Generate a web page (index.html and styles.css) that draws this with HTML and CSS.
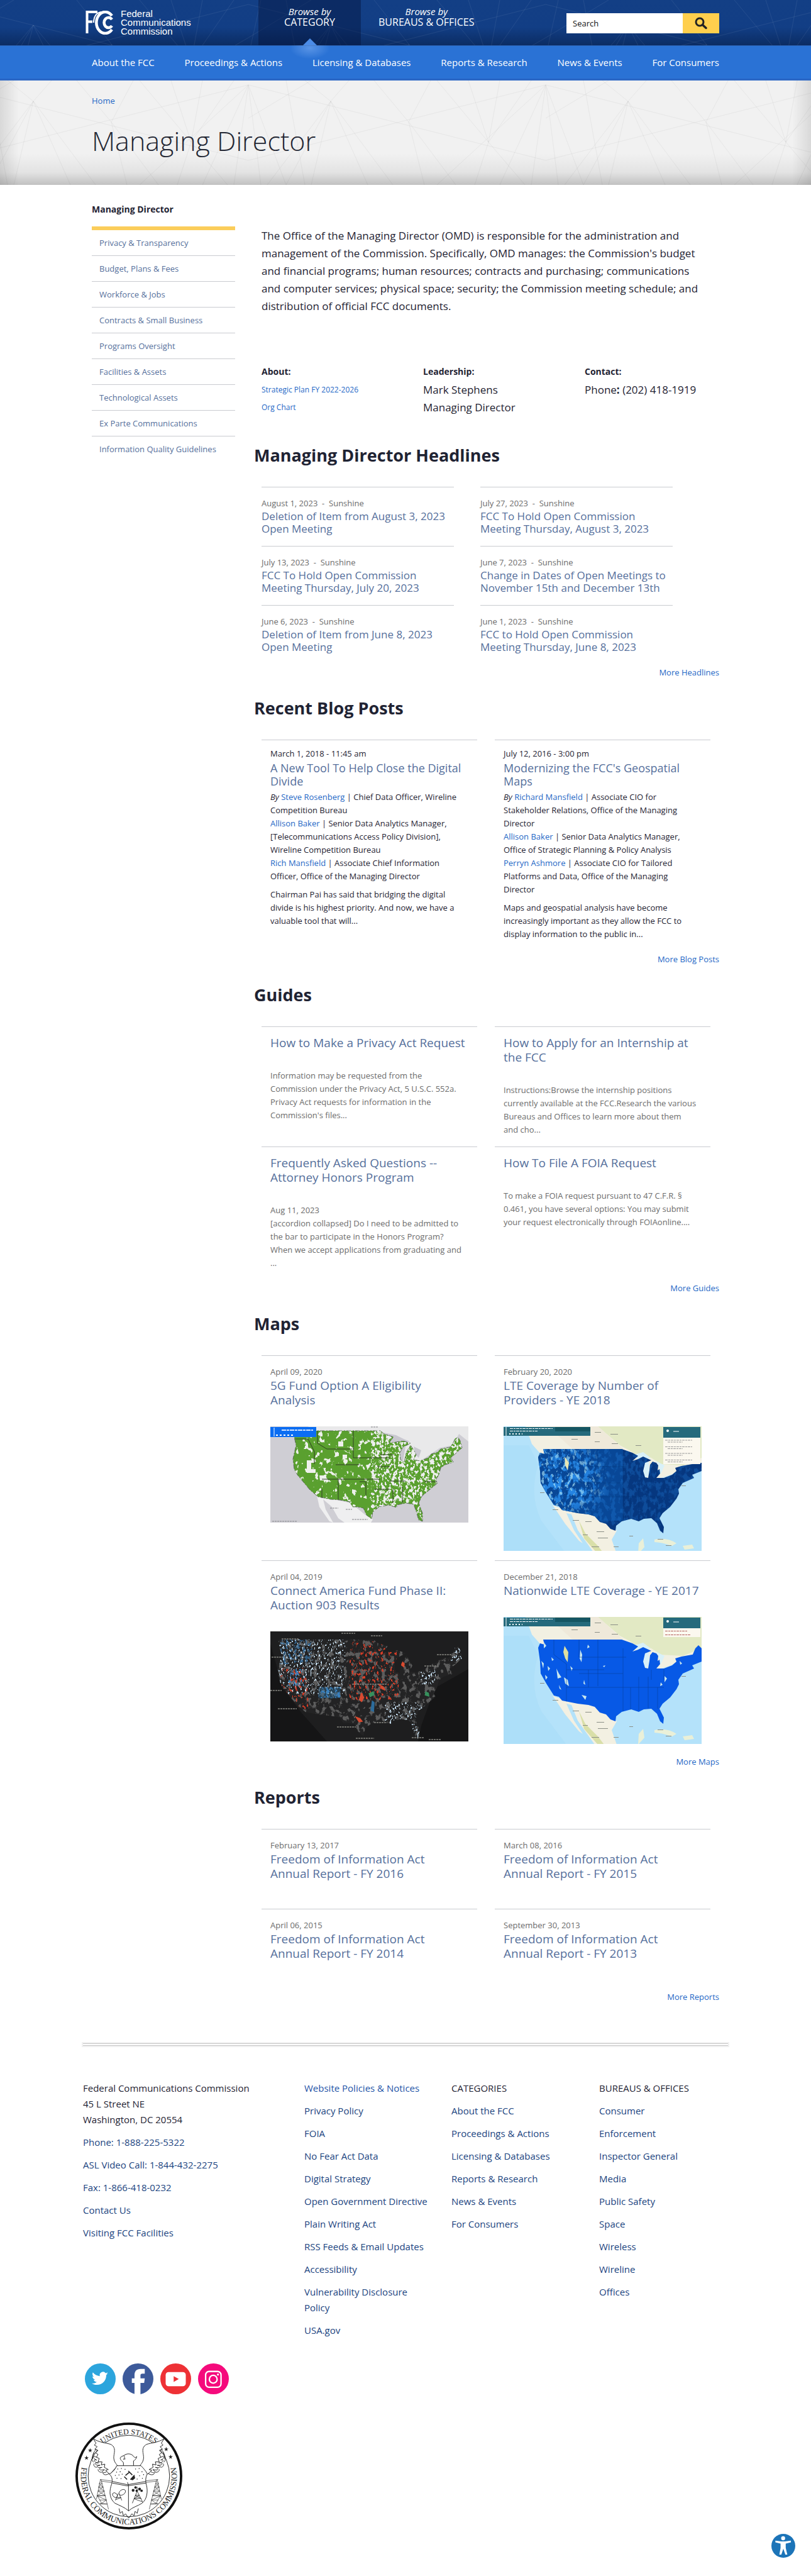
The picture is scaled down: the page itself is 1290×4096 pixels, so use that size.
FILE: index.html
```html
<!DOCTYPE html>
<html lang="en">
<head>
<meta charset="utf-8">
<meta name="viewport" content="width=device-width, initial-scale=1">
<title>Managing Director | Federal Communications Commission</title>
<link rel="stylesheet" href="styles.css">
</head>
<body>
<svg class="defs" width="0" height="0" aria-hidden="true">
  <defs>
    <path id="us-wide" d="M37 7H175L181 12 196 17 189 26 200 25 211 23 223 27 211 33 206 42 207 53 213 57 216 42 223 30 229 39 232 45 228 53 238 55 251 50 256 44 266 41 271 36 286 33 291 26 294 19 299 18 302 23 305 34 296 42 287 50 291 57 278 61 271 66 268 77 263 85 266 90 253 101 241 111 236 122 242 138 242 151 236 149 232 135 228 124 216 122 201 125 201 129 188 125 173 128 163 136 161 147 153 141 148 130 138 128 131 128 126 120 111 117 96 116 76 112 63 101 53 89 43 77 38 68 36 52 41 30 38 17Z"/>
    <path id="us-tall" d="M63 36H188L205 42 214 47 205 55 214 52 222 48 235 54 225 58 222 71 225 81 230 82 232 70 233 61 237 56 243 58 246 62 245 70 248 68 249 75 243 82 255 82 268 77 275 71 273 66 283 63 300 60 315 58V71L300 77 303 82 285 90 278 100 279 107 275 115 265 128 253 138 248 146 255 160 254 170 249 166 244 154 235 146 223 147 215 151 203 147 188 151 179 158 178 166 170 163 163 155 153 152 145 143 135 140 118 138 93 133 88 127 80 125 68 106 59 90 58 71 55 49 58 42 65 44Z"/>
    <path id="states" d="M80 36V60L100 75V140M120 36V64H150M150 36V110M120 90H190M150 64H195M190 50V150M100 84H160M135 84V112M100 112H255M215 95V148M230 95V146M202 112V150M255 82V100M235 84V100M245 112V146" />
    <clipPath id="clip-wide"><use href="#us-wide"/></clipPath>
    <clipPath id="clip-tall"><use href="#us-tall"/></clipPath>
    <clipPath id="clip-east"><rect x="160" y="0" width="160" height="160"/></clipPath>
    <filter id="speck-sparse" x="0" y="0" width="100%" height="100%" color-interpolation-filters="sRGB">
      <feTurbulence type="fractalNoise" baseFrequency="0.13 0.1" numOctaves="3" seed="7"/>
      <feColorMatrix values="0 0 0 0 .93  0 0 0 0 .94  0 0 0 0 .92  16 0 0 0 -9.8"/>
    </filter>
    <filter id="speck-dense" x="0" y="0" width="100%" height="100%" color-interpolation-filters="sRGB">
      <feTurbulence type="fractalNoise" baseFrequency="0.26 0.2" numOctaves="3" seed="3"/>
      <feColorMatrix values="0 0 0 0 .93  0 0 0 0 .93  0 0 0 0 .94  14 0 0 0 -7.5"/>
    </filter>
    <filter id="speck-light" x="0" y="0" width="100%" height="100%" color-interpolation-filters="sRGB">
      <feTurbulence type="fractalNoise" baseFrequency="0.14 0.09" numOctaves="5" seed="11"/>
      <feColorMatrix values="0 0 0 0 .16  0 0 0 0 .55  0 0 0 0 .92  7 0 0 0 -3.3"/>
    </filter>
    <filter id="speck-pale" x="0" y="0" width="100%" height="100%" color-interpolation-filters="sRGB">
      <feTurbulence type="fractalNoise" baseFrequency="0.18 0.11" numOctaves="4" seed="21"/>
      <feColorMatrix values="0 0 0 0 .66  0 0 0 0 .88  0 0 0 0 .96  11 0 0 0 -6.4"/>
    </filter>
    <filter id="speck-grey" x="0" y="0" width="100%" height="100%" color-interpolation-filters="sRGB">
      <feTurbulence type="fractalNoise" baseFrequency="0.16 0.12" numOctaves="4" seed="5"/>
      <feColorMatrix values="0 0 0 0 .36  0 0 0 0 .36  0 0 0 0 .36  10 0 0 0 -5.4"/>
    </filter>
    <filter id="speck-white" x="0" y="0" width="100%" height="100%" color-interpolation-filters="sRGB">
      <feTurbulence type="fractalNoise" baseFrequency="0.4 0.26" numOctaves="3" seed="9"/>
      <feColorMatrix values="0 0 0 0 .78  0 0 0 0 .88  0 0 0 0 .95  13 0 0 0 -7.9"/>
    </filter>
    <filter id="speck-red" x="0" y="0" width="100%" height="100%" color-interpolation-filters="sRGB">
      <feTurbulence type="fractalNoise" baseFrequency="0.3 0.2" numOctaves="3" seed="14"/>
      <feColorMatrix values="0 0 0 0 .86  0 0 0 0 .24  0 0 0 0 .15  13 0 0 0 -7.9"/>
    </filter>
    <filter id="speck-blue" x="0" y="0" width="100%" height="100%" color-interpolation-filters="sRGB">
      <feTurbulence type="fractalNoise" baseFrequency="0.25 0.2" numOctaves="3" seed="31"/>
      <feColorMatrix values="0 0 0 0 .22  0 0 0 0 .5  0 0 0 0 .75  13 0 0 0 -7"/>
    </filter>
    <radialGradient id="west-fade"><stop offset="0" stop-color="#fff"/><stop offset=".6" stop-color="#bbb"/><stop offset="1" stop-color="#000"/></radialGradient>
    <mask id="west"><ellipse cx="95" cy="85" rx="75" ry="70" fill="url(#west-fade)"/></mask>
    <g id="basemap">
      <rect width="315" height="203" fill="#b4e2fa"/>
      <path d="M55 60Q40 110 60 150L100 203H0V30H40Z" fill="#a6dbf8" opacity=".5"/>
      <path d="M35 0H315V58L290 62 270 76 250 84 225 84 200 45H60L45 28Z" fill="#f2f0e2"/>
      <path d="M150 0H315V50L285 62 250 60 235 50 215 48 200 38 185 30Z" fill="#e2e9c4"/>
      <path d="M70 0H150L190 36H110Z" fill="#efe9da"/>
      <path d="M78 125 95 132 145 140 180 166 172 180 180 203H145L118 165 108 140 100 138 112 165 126 186 120 182 98 155Z" fill="#f3f0e2"/>
      <path d="M120 150 130 170 150 190 160 203H150L128 178Z" fill="#d9dfa8"/>
      <path d="M240 180Q260 176 275 186L268 190Q250 184 240 184ZM285 190 300 188 303 194 288 196ZM215 186 222 178 224 192 214 203Z" fill="#eaf0d8"/>
      <path d="M205 46 222 41 234 50 226 52 214 52ZM223 58 231 56 232 78 225 82 221 72ZM240 54 256 62 250 76 246 60Z" fill="#d9f1f8"/>
      <path d="M250 82 268 76 275 72 280 74 262 84Z" fill="#cdeaf5"/>
      <g fill="#8b8f86"><path d="M145 9h10v1h-10zM170 12h12v1h-12zM172 27h10v1h-10zM145 24h8v1h-8zM108 20h10v1h-10zM210 30h9v1h-9zM110 149h10v1h-10zM130 151h10v1h-10zM148 167h12v1h-12zM150 177h16v1h-16zM126 172h8v1h-8zM140 191h12v1h-12zM175 191h8v1h-8zM245 179h9v1h-9zM258 189h9v1h-9zM200 174h6v1h-6zM58 105h7v1h-7zM78 132h9v1h-9zM283 94h7v1h-7z"/></g>
    </g>
    <g id="viewer-bar">
      <path d="M0 1H138V15H0Z" fill="#256a7c"/><path d="M82 1H138V8H82Z" fill="#155562"/>
      <path d="M4 1V15" stroke="#fff"/>
      <path d="M10 3.500H78M10 7.500H54" stroke="#fff" stroke-dasharray="5 1 3 1"/><path d="M9 12H30" stroke="#fff" stroke-width="2" stroke-dasharray="2 3"/>
      <path d="M254 1H313V18H254Z" fill="#256a7c"/><circle cx="261" cy="7" r="2" fill="#fff"/><path d="M270 8H279" stroke="#fff"/>
    </g>
  </defs>
</svg>

<header class="top">
  <div class="wrap top-row">
    <a class="logo" href="#" aria-label="FCC home">
      <svg width="46" height="38" viewBox="0 0 46 38" aria-hidden="true" fill="none" stroke="#fff">
        <path d="M2.500 36V2H19M2.500 17.500H11" stroke-width="4"/>
        <path d="M42 8A14 17 0 1 0 42 30" stroke-width="4.500"/>
        <path d="M42 14A7 8 0 1 0 42 24" stroke-width="4.500"/>
        <path d="M13 19C13 10 17 3 25 2" stroke-width="2"/>
      </svg>
      <span class="logo-text">Federal<br>Communications<br>Commission</span>
    </a>
    <nav class="browse" aria-label="Browse">
      <a class="browse-item is-active" href="#"><em>Browse by</em>CATEGORY</a>
      <a class="browse-item" href="#"><em>Browse by</em>BUREAUS &amp; OFFICES</a>
    </nav>
    <form class="search" role="search">
      <input class="search-input" type="text" placeholder="Search" aria-label="Search">
      <button class="search-button" type="submit" aria-label="Submit search">
        <svg width="22" height="22" viewBox="0 0 22 22" aria-hidden="true" fill="none" stroke="#222" stroke-linecap="round"><circle cx="9" cy="9" r="6" stroke-width="3"/><path d="M13.500 13.500 19 18.500" stroke-width="3.500"/></svg>
      </button>
    </form>
  </div>
</header>
<nav class="mainnav" aria-label="Main">
  <div class="wrap inset mainnav-row">
    <a href="#">About the FCC</a><a href="#">Proceedings &amp; Actions</a><a href="#">Licensing &amp; Databases</a><a href="#">Reports &amp; Research</a><a href="#">News &amp; Events</a><a href="#">For Consumers</a>
  </div>
</nav>
<div class="banner">
  <div class="wrap inset">
    <a class="crumb" href="#">Home</a>
    <h1>Managing Director</h1>
  </div>
</div>

<div class="wrap inset layout">
  <aside class="side">
    <h2 class="side-title">Managing Director</h2>
    <ul class="side-list">
      <li><a href="#">Privacy &amp; Transparency</a></li>
      <li><a href="#">Budget, Plans &amp; Fees</a></li>
      <li><a href="#">Workforce &amp; Jobs</a></li>
      <li><a href="#">Contracts &amp; Small Business</a></li>
      <li><a href="#">Programs Oversight</a></li>
      <li><a href="#">Facilities &amp; Assets</a></li>
      <li><a href="#">Technological Assets</a></li>
      <li><a href="#">Ex Parte Communications</a></li>
      <li><a href="#">Information Quality Guidelines</a></li>
    </ul>
  </aside>

  <main class="main">
    <p class="intro">The Office of the Managing Director (OMD) is responsible for the administration and management of the Commission. Specifically, OMD manages: the Commission's budget and financial programs; human resources; contracts and purchasing; communications and computer services; physical space; security; the Commission meeting schedule; and distribution of official FCC documents.</p>
    <div class="facts">
      <div><h3>About:</h3><a href="#">Strategic Plan FY 2022-2026</a><a href="#">Org Chart</a></div>
      <div><h3>Leadership:</h3><p>Mark Stephens<br>Managing Director</p></div>
      <div><h3>Contact:</h3><p>Phone<b>:</b> (202) 418-1919</p></div>
    </div>

    <section class="block">
      <h2>Managing Director Headlines</h2>
      <div class="cards headlines">
        <article><p class="date">August 1, 2023 &nbsp;-&nbsp; Sunshine</p><h3><a href="#">Deletion of Item from August 3, 2023 Open Meeting</a></h3></article>
        <article><p class="date">July 27, 2023 &nbsp;-&nbsp; Sunshine</p><h3><a href="#">FCC To Hold Open Commission Meeting Thursday, August 3, 2023</a></h3></article>
        <article><p class="date">July 13, 2023 &nbsp;-&nbsp; Sunshine</p><h3><a href="#">FCC To Hold Open Commission Meeting Thursday, July 20, 2023</a></h3></article>
        <article><p class="date">June 7, 2023 &nbsp;-&nbsp; Sunshine</p><h3><a href="#">Change in Dates of Open Meetings to November 15th and December 13th</a></h3></article>
        <article><p class="date">June 6, 2023 &nbsp;-&nbsp; Sunshine</p><h3><a href="#">Deletion of Item from June 8, 2023 Open Meeting</a></h3></article>
        <article><p class="date">June 1, 2023 &nbsp;-&nbsp; Sunshine</p><h3><a href="#">FCC to Hold Open Commission Meeting Thursday, June 8, 2023</a></h3></article>
      </div>
      <a class="more" href="#">More Headlines</a>
    </section>

    <section class="block">
      <h2>Recent Blog Posts</h2>
      <div class="cards blog">
        <article>
          <p class="date">March 1, 2018 - 11:45 am</p>
          <h3><a href="#">A New Tool To Help Close the Digital Divide</a></h3>
          <ul class="authors">
            <li><em>By</em> <a href="#">Steve Rosenberg</a> | Chief Data Officer, Wireline Competition Bureau</li>
            <li><a href="#">Allison Baker</a> | Senior Data Analytics Manager, [Telecommunications Access Policy Division], Wireline Competition Bureau</li>
            <li><a href="#">Rich Mansfield</a> | Associate Chief Information Officer, Office of the Managing Director</li>
          </ul>
          <p class="text">Chairman Pai has said that bridging the digital divide is his highest priority. And now, we have a valuable tool that will...</p>
        </article>
        <article>
          <p class="date">July 12, 2016 - 3:00 pm</p>
          <h3><a href="#">Modernizing the FCC's Geospatial Maps</a></h3>
          <ul class="authors">
            <li><em>By</em> <a href="#">Richard Mansfield</a> | Associate CIO for Stakeholder Relations, Office of the Managing Director</li>
            <li><a href="#">Allison Baker</a> | Senior Data Analytics Manager, Office of Strategic Planning &amp; Policy Analysis</li>
            <li><a href="#">Perryn Ashmore</a> | Associate CIO for Tailored Platforms and Data, Office of the Managing Director</li>
          </ul>
          <p class="text">Maps and geospatial analysis have become increasingly important as they allow the FCC to display information to the public in...</p>
        </article>
      </div>
      <a class="more" href="#">More Blog Posts</a>
    </section>

    <section class="block">
      <h2>Guides</h2>
      <div class="cards guides">
        <article><h3><a href="#">How to Make a Privacy Act Request</a></h3><p class="text">Information may be requested from the Commission under the Privacy Act, 5 U.S.C. 552a. Privacy Act requests for information in the Commission's files...</p></article>
        <article><h3><a href="#">How to Apply for an Internship at the FCC</a></h3><p class="text">Instructions:Browse the internship positions currently available at the FCC.Research the various Bureaus and Offices to learn more about them<br>and cho...</p></article>
        <article><h3><a href="#">Frequently Asked Questions -- Attorney Honors Program</a></h3><p class="text">Aug 11, 2023<br>[accordion collapsed] Do I need to be admitted to the bar to participate in the Honors Program?<br>When we accept applications from graduating and<br>...</p></article>
        <article><h3><a href="#">How To File A FOIA Request</a></h3><p class="text">To make a FOIA request pursuant to 47 C.F.R. § 0.461, you have several options: You may submit your request electronically through FOIAonline....</p></article>
      </div>
      <a class="more" href="#">More Guides</a>
    </section>

    <section class="block">
      <h2>Maps</h2>
      <div class="cards maps">
        <article>
          <p class="date">April 09, 2020</p>
          <h3><a href="#">5G Fund Option A Eligibility Analysis</a></h3>
          <svg class="map" viewBox="0 0 315 153" role="img" aria-label="5G Fund eligibility map">
            <rect width="315" height="153" fill="#cfced4"/>
            <path d="M60 0H315V24L300 12 290 30 270 34 255 44 240 54 232 60 205 60 185 20 70 8Z" fill="#e9e9ea"/>
            <path d="M74 110 100 116 128 122 150 140 163 148 160 153H118L108 146 98 128 84 116 88 132 100 153 94 151 78 128Z" fill="#efeff0"/>
            <path d="M180 10 200 14 212 20 222 24 205 28 190 24ZM206 34 215 32 211 56 206 52ZM228 32 240 38 236 50 230 44ZM238 56 256 48 252 54Z" fill="#c9c8d0"/>
            <use href="#us-wide" fill="#5aa02f"/>
            <g clip-path="url(#clip-wide)">
              <rect width="315" height="153" filter="url(#speck-sparse)"/>
              <g clip-path="url(#clip-east)"><rect x="0" width="315" height="160" filter="url(#speck-dense)"/></g>
              <g fill="#eef0ec"><path d="M58 54h12v4h-5v10h7v6h-14zM78 78h10l3 8h-12zM115 45h7v6h-7zM108 24h8v8h-8z"/></g>
              <path d="M38 20H60L70 40V60M75 7V27L90 36H130M132 7V50H190M104 61H142M82 84H175M108 84V118M82 100V114M190 87H215M245 88H268M142 88H152V110M165 100H190M195 100V122M210 96V122M170 64H190M175 45H195" fill="none" stroke="#2f3f25" stroke-width="1"/>
            </g>
            <use href="#us-wide" fill="none" stroke="#4b5a4c" stroke-width=".8" stroke-dasharray="7 3 2 2"/>
            <path d="M0 1H73V17H0Z" fill="#0b6df2"/><path d="M6 2V16" stroke="#fff"/><path d="M18 6H68" stroke="#cfe2ff" stroke-width="2" stroke-dasharray="7 1 4 1"/><path d="M9 14H38" stroke="#fff" stroke-width="2" stroke-dasharray="3 3"/>
            <path d="M95 130H108M120 132H130M130 148H155M160 1H172M3 151H42" stroke="#85858a" stroke-dasharray="3 1"/>
          </svg>
        </article>
        <article>
          <p class="date">February 20, 2020</p>
          <h3><a href="#">LTE Coverage by Number of Providers - YE 2018</a></h3>
          <svg class="map" viewBox="0 0 315 198" role="img" aria-label="LTE coverage map by number of providers">
            <use href="#basemap"/>
            <use href="#us-tall" fill="#06377f"/>
            <g clip-path="url(#clip-tall)">
              <path d="M55 30H190V150H55Z" fill="#0a57b0" opacity=".5"/>
              <rect width="315" height="198" filter="url(#speck-light)" mask="url(#west)"/>
              <rect width="315" height="198" filter="url(#speck-light)" opacity=".25"/>
              <rect width="315" height="198" filter="url(#speck-pale)" mask="url(#west)" opacity=".8"/>
              <path d="M97 48 104 58 102 70 98 62Z" fill="#e8e6b4"/>
              <use href="#states" fill="none" stroke="#04306e" stroke-width=".6" opacity=".6"/>
            </g>
            <use href="#viewer-bar"/>
            <path d="M254 18H313V60H254Z" fill="#fbf8ef"/><g stroke="#9a9a9a" stroke-dasharray="4 1 3 1"><path d="M257 22H300M261 25H285M257 32.500H300M261 35.500H285M257 43H300M261 46H285M257 53.500H300M261 56.500H285"/></g>
          </svg>
        </article>
        <article>
          <p class="date">April 04, 2019</p>
          <h3><a href="#">Connect America Fund Phase II: Auction 903 Results</a></h3>
          <svg class="map" viewBox="0 0 315 175" role="img" aria-label="Connect America Fund auction results map">
            <rect width="315" height="175" fill="#1e1e1f"/>
            <path d="M0 20 20 90 50 130 90 175H0ZM262 90 315 60V175H235L240 150Z" fill="#151516"/>
            <g transform="translate(-27 5) scale(1.09 1.1)">
              <use href="#us-wide" fill="#232324"/>
              <g clip-path="url(#clip-wide)">
                <rect width="315" height="160" filter="url(#speck-grey)"/>
                <svg x="36" y="6" width="98" height="80"><rect width="98" height="80" filter="url(#speck-white)"/><rect x="0" y="0" width="50" height="36" filter="url(#speck-blue)" opacity=".6"/></svg>
                <svg x="50" y="50" width="24" height="24"><rect width="24" height="24" filter="url(#speck-blue)"/></svg>
                <svg x="95" y="76" width="32" height="16"><rect width="32" height="16" fill="#2e6d9c" opacity=".4"/><rect width="32" height="16" filter="url(#speck-blue)"/></svg>
                <svg x="140" y="10" width="72" height="85"><rect width="72" height="85" filter="url(#speck-red)"/></svg>
                <svg x="38" y="48" width="42" height="60"><rect width="42" height="60" filter="url(#speck-red)"/></svg>
                <svg x="244" y="50" width="22" height="22"><rect width="22" height="22" filter="url(#speck-white)"/></svg>
                <svg x="192" y="98" width="58" height="60"><rect width="58" height="60" filter="url(#speck-white)"/></svg>
                <svg x="288" y="12" width="22" height="26"><rect width="22" height="26" filter="url(#speck-white)"/></svg>
                <path d="M148 118 156 121 160 126 154 127ZM184 72 190 75 193 81 187 79ZM217 38 221 42 220 48 215 44ZM157 84 162 91 158 98 154 94Z" fill="#d84a30"/>
                <path d="M168 85 175 82 177 87 170 91ZM251 82 256 84 257 90 250 88Z" fill="#36905c"/>
                <path d="M173 95 177 98 176 112 171 110Z" fill="#2c6c9c"/>
              </g>
            </g>
            <path d="M113 3H135M160 7H178M18 12H46M2 41H20M0 94H18M12 123H42M106 152H136M165 145H186M136 170H165M225 169H244M252 172H272M265 37H288M245 55H266M130 84H186" stroke="#84847f" stroke-width="1.500" stroke-dasharray="3 1"/>
          </svg>
        </article>
        <article>
          <p class="date">December 21, 2018</p>
          <h3><a href="#">Nationwide LTE Coverage - YE 2017</a></h3>
          <svg class="map" viewBox="0 0 315 202" role="img" aria-label="Nationwide LTE coverage map">
            <use href="#basemap"/>
            <use href="#us-tall" fill="#0759e6"/>
            <path d="M300 62 305 50 310 45 315 50V66Z" fill="#0759e6"/>
            <g clip-path="url(#clip-tall)">
              <path d="M97 46 103 56 102 72 98 66 95 56Z" fill="#dfe0a0"/>
              <path d="M122 52 125 60 124 72 121 66ZM84 82 88 90 92 96 86 98ZM96 96 102 100 104 110 98 106ZM88 108 92 116 89 114ZM64 40 68 46 64 50ZM124 124 132 126 130 132ZM60 70 64 74 63 82ZM134 44 137 48 133 50ZM70 78 74 82 71 86ZM128 100 130 108 127 106ZM158 78 162 77 160 80ZM256 94 260 98 256 104ZM250 104 253 108 249 110ZM76 64 80 68 77 70ZM66 92 70 96 67 100ZM106 78 110 82 108 86ZM280 70 284 74 281 76Z" fill="#c9e7ee"/>
              <use href="#states" fill="none" stroke="#063f9f" stroke-width=".6"/>
            </g>
            <use href="#viewer-bar"/>
            <path d="M254 18H313V32H254Z" fill="#fbf8ef"/><path d="M257 22.500H293M257 28.500H297" stroke="#b3605c" stroke-dasharray="4 1 3 1"/>
          </svg>
        </article>
      </div>
      <a class="more" href="#">More Maps</a>
    </section>

    <section class="block">
      <h2>Reports</h2>
      <div class="cards reports">
        <article><p class="date">February 13, 2017</p><h3><a href="#">Freedom of Information Act Annual Report - FY 2016</a></h3></article>
        <article><p class="date">March 08, 2016</p><h3><a href="#">Freedom of Information Act Annual Report - FY 2015</a></h3></article>
        <article><p class="date">April 06, 2015</p><h3><a href="#">Freedom of Information Act Annual Report - FY 2014</a></h3></article>
        <article><p class="date">September 30, 2013</p><h3><a href="#">Freedom of Information Act Annual Report - FY 2013</a></h3></article>
      </div>
      <a class="more" href="#">More Reports</a>
    </section>
  </main>
</div>

<footer class="wrap footer">
  <div class="rule"></div>
  <div class="foot-cols">
    <ul>
      <li>Federal Communications Commission<br>45 L Street NE<br>Washington, DC 20554</li>
      <li><a href="#">Phone: 1-888-225-5322</a></li>
      <li><a href="#">ASL Video Call: 1-844-432-2275</a></li>
      <li><a href="#">Fax: 1-866-418-0232</a></li>
      <li><a href="#">Contact Us</a></li>
      <li><a href="#">Visiting FCC Facilities</a></li>
    </ul>
    <ul>
      <li><a class="brighter" href="#">Website Policies &amp; Notices</a></li>
      <li><a href="#">Privacy Policy</a></li>
      <li><a href="#">FOIA</a></li>
      <li><a href="#">No Fear Act Data</a></li>
      <li><a href="#">Digital Strategy</a></li>
      <li><a href="#">Open Government Directive</a></li>
      <li><a href="#">Plain Writing Act</a></li>
      <li><a href="#">RSS Feeds &amp; Email Updates</a></li>
      <li><a href="#">Accessibility</a></li>
      <li><a href="#">Vulnerability Disclosure Policy</a></li>
      <li><a href="#">USA.gov</a></li>
    </ul>
    <ul>
      <li>CATEGORIES</li>
      <li><a href="#">About the FCC</a></li>
      <li><a href="#">Proceedings &amp; Actions</a></li>
      <li><a href="#">Licensing &amp; Databases</a></li>
      <li><a href="#">Reports &amp; Research</a></li>
      <li><a href="#">News &amp; Events</a></li>
      <li><a href="#">For Consumers</a></li>
    </ul>
    <ul>
      <li>BUREAUS &amp; OFFICES</li>
      <li><a href="#">Consumer</a></li>
      <li><a href="#">Enforcement</a></li>
      <li><a href="#">Inspector General</a></li>
      <li><a href="#">Media</a></li>
      <li><a href="#">Public Safety</a></li>
      <li><a href="#">Space</a></li>
      <li><a href="#">Wireless</a></li>
      <li><a href="#">Wireline</a></li>
      <li><a href="#">Offices</a></li>
    </ul>
  </div>
  <div class="social">
    <a href="#" aria-label="Twitter"><svg viewBox="0 0 150 150"><circle cx="75" cy="75" r="75" fill="#2ca5dd"/><path d="M113 50c-3 1-6 2-9 2.500 3-2 6-5 7-9-3 2-6.500 3-10 4a16 16 0 0 0-28 14.500C60 61 48 55 39 44c-4 7-2 16 5 21-3 0-5-1-7-2 0 8 5 14 13 16-2 .6-5 .7-7 .3 2 6 8 11 15 11-6 5-15 8-24 7 7 5 15 7 24 7 30 0 46-24 46-46v-2c3-2 6-5 9-8Z" fill="#fff"/></svg></a>
    <a href="#" aria-label="Facebook"><svg viewBox="0 0 150 150"><circle cx="75" cy="75" r="75" fill="#3d5a9a"/><path d="M58 150V95H45V73H58V58C58 38 68 27 88 27H108V50H96C90 50 87 53 87 58V73H108L105 95H87V150Z" fill="#fff"/></svg></a>
    <a href="#" aria-label="YouTube"><svg viewBox="0 0 150 150"><circle cx="75" cy="75" r="75" fill="#ee3135"/><rect x="26" y="42" width="98" height="69" rx="14" fill="#fff"/><path d="M65 62V90L90 76Z" fill="#ee3135"/></svg></a>
    <a href="#" aria-label="Instagram"><svg viewBox="0 0 150 150"><circle cx="75" cy="75" r="75" fill="#f50a7c"/><g fill="none" stroke="#fff" stroke-width="7"><rect x="37" y="39" width="75" height="77" rx="17"/><circle cx="74" cy="77" r="19"/></g><circle cx="97" cy="54" r="5" fill="#fff"/></svg></a>
  </div>
  <svg class="seal" viewBox="0 0 530 530" role="img" aria-label="Seal of the Federal Communications Commission">
    <defs>
      <path id="arc-top" d="M58 265A207 207 0 0 1 472 265"/>
      <path id="arc-bottom" d="M40 190A238 238 0 1 0 490 190"/>
      <path id="star" d="M0-11 3-3 11-3 4 2 7 10 0 5-7 10-4 2-11-3-3-3Z"/>
      <g id="wing">
        <path d="M88 80C120 100 150 100 175 108C205 125 190 150 190 175C192 200 205 205 208 215L190 235 172 256 160 248 150 236 163 233 143 222 146 206 128 210 132 195 112 195 118 178 104 172 112 158 100 150 112 138 96 132 108 120 94 112 102 102Z" fill="#fff"/>
        <path d="M103 132C88 150 84 160 86 180M104 172C84 160 84 176 104 186M106 186C84 180 92 200 116 200M112 200C90 196 94 214 122 212M122 212C100 212 104 228 132 222M132 222C110 226 116 242 144 232M144 236C124 242 134 256 154 244M94 150C80 170 78 190 90 196M92 204C88 214 96 222 106 222M112 232C112 244 124 248 132 246M136 250C140 262 154 260 166 254"/>
      </g>
      <g id="tower">
        <path d="M124 282 104 380M127 282 164 430M118 300H132M114 320H138M112 340H144M108 362H148M118 384H154M122 404H158M116 302 138 320 112 340 148 362 108 364 154 384M132 302 114 320 144 340 108 362 130 400 154 384M120 400 158 404"/>
      </g>
    </defs>
    <circle cx="265" cy="265" r="259" fill="#fff" stroke="#111" stroke-width="12"/>
    <g fill="none" stroke="#222" stroke-width="3">
      <circle cx="265" cy="265" r="202"/>
      <use href="#wing"/><use href="#wing" transform="translate(528 0) scale(-1 1)"/>
      <g stroke-width="2"><use href="#tower"/><use href="#tower" transform="translate(530 0) scale(-1 1)"/><path d="M122 282 252 300 410 282M126 290 250 308 406 290"/></g>
      <path d="M238 213 238 198C226 188 222 182 222 176C224 170 232 166 240 164C256 150 280 154 288 168C294 174 300 176 304 168C302 182 292 188 288 190V213M240 164C246 172 244 178 238 182L248 180" fill="#fff"/>
      <path d="M205 214H325C340 230 352 244 356 255C348 270 346 290 352 310C360 340 356 380 330 400C310 414 280 420 264 438C244 420 220 412 196 400C172 380 166 350 176 316C186 290 184 268 168 256C186 246 198 230 205 214Z" fill="#fff"/>
      <path d="M182 292 258 308 350 292M258 296 263 312V438M183 300 256 314 350 300"/>
      <path d="M216 426 222 450 232 440 238 462 248 452 264 474 280 452 290 462 296 440 306 450 312 426"/>
      <g stroke-width="2.500"><ellipse cx="196" cy="360" rx="14" ry="10" transform="rotate(40 196 360)"/><ellipse cx="232" cy="346" rx="18" ry="12" transform="rotate(-35 232 346)"/><path d="M212 352 198 386M216 352 230 386M204 372H226M200 382 226 372"/>
      <path d="M306 340 282 400M306 340 334 396M296 360H318M290 376H326M296 362 324 376M316 362 290 378 330 392M306 318V342"/></g>
      <path d="M262 240 282 260M242 268 256 282M248 262 268 246" stroke-width="5"/>
    </g>
    <g fill="#222"><circle cx="298" cy="322" r="6"/><circle cx="318" cy="330" r="7"/><circle cx="286" cy="336" r="7"/><circle cx="328" cy="338" r="6"/><circle cx="304" cy="338" r="6"/><path d="M270 282 292 258 296 276 284 286Z"/>
      <path d="M208 228h4v4h-4zM226 226h4v4h-4zM244 230h4v4h-4zM296 228h4v4h-4zM314 226h4v4h-4zM202 244h4v4h-4zM220 242h4v4h-4zM308 244h4v4h-4zM328 242h4v4h-4zM196 260h4v4h-4zM214 258h4v4h-4zM230 254h4v4h-4zM316 262h4v4h-4zM336 256h4v4h-4zM204 274h4v4h-4zM224 276h4v4h-4zM304 278h4v4h-4zM330 274h4v4h-4z"/>
      <use href="#star" x="73" y="138"/><use href="#star" x="55" y="175"/><use href="#star" x="450" y="132"/><use href="#star" x="472" y="170"/>
    </g>
    <g class="seal-text"><text font-size="38"><textPath href="#arc-top" startOffset="50%" text-anchor="middle">UNITED STATES</textPath></text>
    <text font-size="41"><textPath href="#arc-bottom" startOffset="50%" text-anchor="middle">FEDERAL COMMUNICATIONS COMMISSION</textPath></text></g>
  </svg>
</footer>

<button class="access" type="button" aria-label="Accessibility options">
  <svg viewBox="0 0 120 120" aria-hidden="true"><circle cx="60" cy="60" r="60" fill="#1c74b8"/><circle cx="59" cy="22" r="10" fill="#fff"/><path d="M20 34 50 38H68L98 34V43L72 49V70L80 104H70L60 74 50 104H40L46 70V49L20 43Z" fill="#fff"/></svg>
</button>
</body>
</html>
```
FILE: styles.css
```css
* { box-sizing: border-box; }

body {
  margin: 0;
  background: #fff;
  color: #1f2333;
  font: 15px/25px "Open Sans", "Noto Sans", sans-serif;
}

a { color: #1f68c6; text-decoration: none; }
h1, h2, h3, p, ul { margin: 0; padding: 0; }
ul { list-style: none; }
.defs { position: absolute; }

.wrap { width: 100%; max-width: 1026px; margin: 0 auto; }
.inset { padding-left: 14px; padding-right: 14px; }

/* Header */
.top {
  background:
    url("data:image/svg+xml,%3Csvg xmlns='http://www.w3.org/2000/svg' width='473' height='160'%3E%3Cg stroke='%23fff' stroke-opacity='.07' fill='none'%3E%3Cpath d='M0 7 473 127M0 127 473 7M131 40 60 160M131 40 30 160M131 40 100 160M131 40 190 160M131 40 230 160M382 98 300 0M382 98 350 0M382 98 400 0M382 98 450 0M255 70 200 0M255 70 280 160M255 70 330 160M0 60 100 0M473 60 300 160M60 0 90 160M20 0 0 90M473 90 430 160'/%3E%3C/g%3E%3C/svg%3E") 395px 0,
    linear-gradient(#133f85 0, #123e85 60%, #0b2c63 100%);
}
.top-row { display: flex; height: 72px; padding: 0 14px 0 4px; }
.logo { display: flex; align-items: center; gap: 10px; width: 275px; color: #fff; }
.logo-text { font: 15px/14px "Liberation Sans", Arial, sans-serif; }
.browse { display: flex; }
.browse-item {
  position: relative;
  padding: 10px 28px 0;
  min-width: 163px;
  color: #fff;
  font-size: 16px;
  line-height: 17px;
  text-align: center;
}
.browse-item em { display: block; font-size: 15px; }
.is-active { background: rgba(4, 20, 60, .45); }
.is-active::after {
  content: "";
  position: absolute;
  left: 50%;
  bottom: 0;
  margin-left: -11px;
  border: 11px solid transparent;
  border-top: 0;
  border-bottom-color: #4b8be6;
}
.is-active::before {
  content: "";
  position: absolute;
  z-index: 1;
  left: 50%;
  top: 72px;
  width: 64px;
  height: 22px;
  margin-left: -32px;
  background: radial-gradient(ellipse at 50% 20%, rgba(120, 170, 240, .6), transparent 70%);
}
.search { display: flex; width: 243px; height: 32px; margin: 21px 0 0 auto; }
.search-input {
  flex: 1;
  min-width: 0;
  padding: 0 10px;
  border: 0;
  border-radius: 0;
  background: #fff;
  font: 13px "Open Sans", sans-serif;
}
.search-input::placeholder { color: #111; opacity: 1; }
.search-button {
  display: grid;
  place-items: center;
  width: 58px;
  padding: 0;
  border: 0;
  background: #ffcf4d;
}

.mainnav { background: #2a72d5; border-top: 1px solid #2b5ea9; border-bottom: 3px solid #2a66c4; }
.mainnav-row { display: flex; justify-content: space-between; height: 52px; align-items: center; }
.mainnav a { color: #fff; }

.banner {
  height: 166px;
  padding-top: 20px;
  background:
    linear-gradient(transparent 70%, rgba(0, 0, 0, .06) 88%, rgba(0, 0, 0, .2)),
    linear-gradient(90deg, rgba(0, 0, 0, .1), transparent 30px calc(100% - 30px), rgba(0, 0, 0, .1)),
    url("data:image/svg+xml,%3Csvg xmlns='http://www.w3.org/2000/svg' width='473' height='166'%3E%3Cg stroke='%23000' stroke-opacity='.045' fill='none'%3E%3Cpath d='M0 7 473 127M0 127 473 7M0 7 60 166M0 7 20 166M131 33 60 166M131 33 30 166M131 33 100 166M131 33 190 166M131 33 230 166M131 33 90 0M131 33 160 0M382 98 300 0M382 98 350 0M382 98 400 0M382 98 450 0M382 98 360 166M382 98 440 166M255 66 200 0M255 66 280 166M255 66 330 166M255 66 290 0M0 60 100 0M473 7 300 166M473 7 400 166M473 7 450 166M60 0 90 166'/%3E%3C/g%3E%3C/svg%3E") 395px 0,
    #f1f1f1;
}
.crumb { display: block; font-size: 13px; line-height: 24px; }
h1 { margin-top: 25px; color: #222633; font-size: 43px; font-weight: 300; line-height: 54px; }

/* Layout */
.layout { display: grid; grid-template-columns: 228px minmax(0, 1fr); gap: 30px; align-items: start; }
.side { padding-top: 29px; }
.side-title {
  padding-bottom: 17px;
  border-bottom: 6px solid #fbcd5a;
  font-size: 14px;
  line-height: 20px;
}
.side-list li { border-bottom: 1px solid #c9cbd0; padding: 10px 12px; line-height: 20px; font-size: 13px; }
.side-list li:last-child { border-bottom: 0; }
.side-list a, h3 a { color: #56709c; }

.main { padding-top: 67px; }
.intro { max-width: 720px; padding: 0 12px; font-size: 17px; line-height: 28px; }
.facts { display: grid; grid-template-columns: repeat(3, 1fr); margin: 75px -43px 0 12px; font-size: 17px; line-height: 28px; }
.facts h3 { font-size: 14px; line-height: 30px; }
.facts a { display: block; font-size: 12px; }

.block { margin-top: 29px; }
.facts + .block { margin-top: 44px; }
.block h2 { margin-bottom: 32px; font-size: 27px; line-height: 36px; }
.cards {
  display: grid;
  grid-template-columns: repeat(2, minmax(0, 343px));
  column-gap: 28px;
  padding-left: 12px;
}
.cards article { padding: 15px 14px 16px; border-top: 1px solid #c9cbd0; }
.cards h3 { margin-top: 1px; font-size: 19px; font-weight: 400; line-height: 23px; }
.date { color: #6c6c6c; font-size: 13px; line-height: 20px; }
.text { color: #6c6c6c; font-size: 13px; line-height: 21px; }
.more { display: block; margin-top: 3px; font-size: 13px; line-height: 20px; text-align: right; }

.cards.headlines { grid-template-columns: repeat(2, minmax(0, 306px)); column-gap: 42px; }
.headlines article { padding: 15px 0 17px; }
.headlines h3 { font-size: 17px; line-height: 20px; }

.blog article { padding: 11px 24px 16px 14px; }
.blog .date, .blog .text { color: #1f2333; }
.blog h3 { margin: 3px 0 4px; font-size: 18px; line-height: 21px; }
.authors { margin-bottom: 8px; font-size: 13px; line-height: 21px; }

.guides article { padding-top: 14px; }
.guides h3 { margin: 0 0 30px; }

.maps article { padding-bottom: 15px; }
.map { display: block; width: 100%; height: auto; margin-top: 30px; }

.reports article { padding: 15px 32px 44px 14px; }

/* Footer */
.footer { padding: 64px 0 76px; }
.rule { height: 4px; border: solid #c6c6c6; border-width: 1px 0; box-shadow: 0 0 0 2px #f1f1f1; }
.foot-cols { display: grid; grid-template-columns: 352fr 234fr 235fr 205fr; padding-top: 55px; }
.foot-cols ul { padding-right: 26px; }
.foot-cols li { margin-bottom: 11px; }
.foot-cols a { color: #1b4480; }
.foot-cols a.brighter { color: #1f55a8; }
.social { display: flex; gap: 11px; padding: 29px 3px 0; }
.social a { width: 49px; height: 49px; }
.social svg { display: block; }
.seal { display: block; width: 170px; height: 170px; margin: 45px 0 0 -12px; }
.seal-text { font-family: "Liberation Serif", "Times New Roman", serif; fill: #222; }

.access {
  position: fixed;
  right: 25px;
  bottom: 29px;
  width: 38px;
  height: 38px;
  padding: 0;
  border: 0;
  border-radius: 50%;
  background: none;
}
.access svg { display: block; }
```
